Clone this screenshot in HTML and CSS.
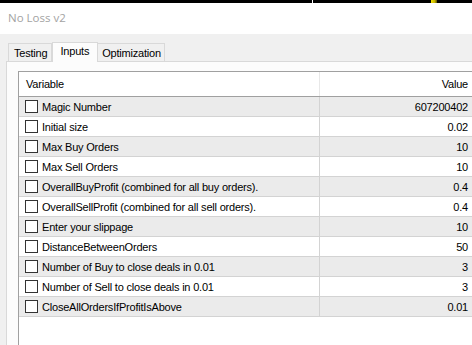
FILE: index.html
```html
<!DOCTYPE html>
<html lang="en">
<head>
    <meta charset="UTF-8">
    <title>No Loss v2</title>
    <link rel="stylesheet" href="styles.css">
</head>
<body>
    <div class="topbar">
        <span class="tick"></span>
        <span class="mark"></span>
    </div>
    <div class="titlebar">No Loss v2</div>

    <div class="tabs">
        <div class="tab">Testing</div>
        <div class="tab active">Inputs</div>
        <div class="tab">Optimization</div>
    </div>

    <div class="panel">
        <div class="list">
            <div class="row head">
                <div class="cell var">Variable</div>
                <div class="cell val">Value</div>
            </div>
            <div class="row odd">
                <div class="cell var"><span class="box"></span>Magic Number</div>
                <div class="cell val">607200402</div>
            </div>
            <div class="row">
                <div class="cell var"><span class="box"></span>Initial size</div>
                <div class="cell val">0.02</div>
            </div>
            <div class="row odd">
                <div class="cell var"><span class="box"></span>Max Buy Orders</div>
                <div class="cell val">10</div>
            </div>
            <div class="row">
                <div class="cell var"><span class="box"></span>Max Sell Orders</div>
                <div class="cell val">10</div>
            </div>
            <div class="row odd">
                <div class="cell var"><span class="box"></span>OverallBuyProfit (combined for all buy orders).</div>
                <div class="cell val">0.4</div>
            </div>
            <div class="row">
                <div class="cell var"><span class="box"></span>OverallSellProfit (combined for all sell orders).</div>
                <div class="cell val">0.4</div>
            </div>
            <div class="row odd">
                <div class="cell var"><span class="box"></span>Enter your slippage</div>
                <div class="cell val">10</div>
            </div>
            <div class="row">
                <div class="cell var"><span class="box"></span>DistanceBetweenOrders</div>
                <div class="cell val">50</div>
            </div>
            <div class="row odd">
                <div class="cell var"><span class="box"></span>Number of Buy to close deals in 0.01</div>
                <div class="cell val">3</div>
            </div>
            <div class="row">
                <div class="cell var"><span class="box"></span>Number of Sell to close deals in 0.01</div>
                <div class="cell val">3</div>
            </div>
            <div class="row odd">
                <div class="cell var"><span class="box"></span>CloseAllOrdersIfProfitIsAbove</div>
                <div class="cell val">0.01</div>
            </div>
        </div>
    </div>
</body>
</html>
```

FILE: styles.css
```css
html, body {
    margin: 0;
    height: 100%;
    overflow: hidden;
}

body {
    display: flex;
    flex-direction: column;
    font-family: "Liberation Sans", Arial, sans-serif;
    font-size: 11px;
    letter-spacing: -0.2px;
    color: #000;
    background-color: #f0f0f0;
}

.topbar {
    height: 3px;
    flex-shrink: 0;
    background-color: #000;
    display: flex;
}

.tick {
    width: 1px;
    margin-left: 312px;
    background-color: #fff;
}

.mark {
    width: 6px;
    margin-left: 118px;
    background: linear-gradient(90deg, #f4e200, #c9b800 60%, #5a5200);
}

.titlebar {
    height: 31px;
    flex-shrink: 0;
    background-color: #fff;
    color: #a3a3a3;
    font-family: "Segoe UI", "Open Sans", "Liberation Sans", sans-serif;
    font-size: 11.5px;
    letter-spacing: 0;
    line-height: 30px;
    padding-left: 8px;
}

.tabs {
    display: flex;
    flex-shrink: 0;
    align-items: flex-end;
    margin-top: 7px;
    padding-left: 8px;
    height: 20px;
}

.tab {
    height: 17px;
    line-height: 18px;
    padding: 0 4px 0 5px;
    border: 1px solid #d9d9d9;
    border-bottom: none;
    background-color: #f0f0f0;
}

.tab + .tab {
    border-left: none;
}

.tab.active {
    height: 19px;
    line-height: 17px;
    padding: 0 8px 0 7px;
    background-color: #fcfcfc;
    border-left: 1px solid #d9d9d9;
    border-right: 1px solid #d9d9d9;
    margin-bottom: -1px;
    position: relative;
    z-index: 1;
}

.tab.active + .tab {
    border-left: none;
    padding-left: 4px;
    padding-right: 3px;
}

.panel {
    flex: 1;
    min-height: 0;
    margin-left: 6px;
    border-top: 1px solid #d9d9d9;
    border-left: 1px solid #d9d9d9;
    background-color: #fcfcfc;
    padding: 9px 0 0 11px;
}

.list {
    height: 100%;
    border-top: 1px solid #a0a0a0;
    border-left: 1px solid #a0a0a0;
    background-color: #fff;
}

.row {
    display: flex;
    height: 19px;
    border-bottom: 1px solid #d3d3d3;
    background-color: #fff;
}

.row.odd {
    background-color: #ebebeb;
}

.row.head {
    height: 24px;
    border-bottom: 1px solid #a0a0a0;
}

.cell {
    display: flex;
    align-items: center;
    white-space: nowrap;
    overflow: hidden;
}

.var {
    width: 301px;
    padding-left: 6px;
    box-sizing: border-box;
    border-right: 1px solid #d3d3d3;
}

.head .var {
    padding-left: 7px;
    border-right-color: #e8e8e8;
}

.val {
    flex: 1;
    justify-content: flex-end;
    padding-right: 4px;
}

.box {
    width: 11px;
    height: 11px;
    border: 1px solid #333;
    background-color: #fff;
    margin-right: 4px;
    flex-shrink: 0;
}
```
